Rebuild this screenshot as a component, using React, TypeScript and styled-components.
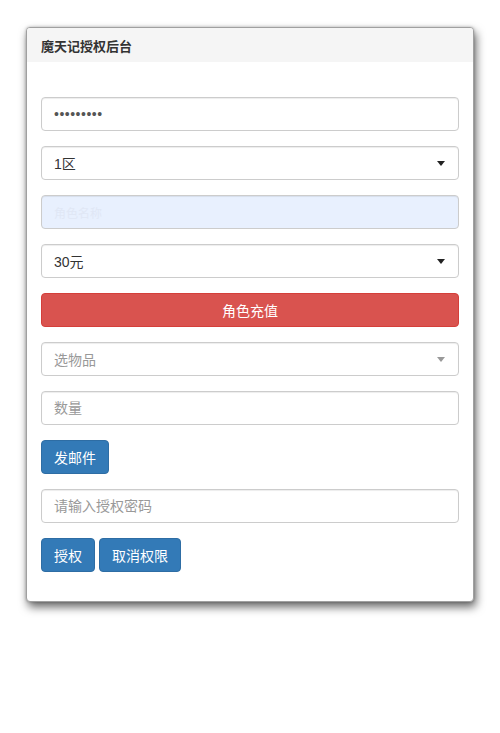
import React from 'react';
import styled, { createGlobalStyle } from 'styled-components';

const GlobalStyle = createGlobalStyle`
  html, body {
    margin: 0;
    padding: 0;
    background: #fff;
    font-family: "Liberation Sans", Arial, "Noto Sans CJK SC", sans-serif;
    font-size: 14px;
    color: #333;
  }
  * {
    box-sizing: border-box;
  }
`;

const Page = styled.div`
  padding: 27px 0 40px;
`;

const Panel = styled.div`
  width: 448px;
  margin: 0 auto;
  background: #fff;
  border: 1px solid #a0a0a0;
  border-radius: 4px;
  box-shadow: 2px 5px 10px rgba(0, 0, 0, 0.6), 0 0 3px rgba(0, 0, 0, 0.25);
`;

const PanelHeading = styled.div`
  height: 34px;
  padding: 0 14px;
  display: flex;
  align-items: center;
  background: #f5f5f5;
  border-radius: 3px 3px 0 0;
  font-size: 13px;
  font-weight: bold;
  color: #333;
`;

const PanelBody = styled.div`
  padding: 35px 14px 29px;
  display: flex;
  flex-direction: column;
  gap: 15px;
`;

const Field = styled.div<{ $autofill?: boolean }>`
  height: 34px;
  padding: 0 12px;
  display: flex;
  align-items: center;
  border: 1px solid #ccc;
  border-radius: 4px;
  background: ${p => (p.$autofill ? '#e8f0fe' : '#fff')};
  box-shadow: inset 0 1px 1px rgba(0, 0, 0, 0.075);
  font-size: 14px;
  color: #555;
`;

const Input = styled.input<{ $dots?: boolean; $faint?: boolean }>`
  width: 100%;
  border: none;
  outline: none;
  padding: 0;
  background: transparent;
  font-family: inherit;
  font-size: ${p => (p.$faint ? '12px' : '14px')};
  color: ${p => (p.$faint ? '#e0e7f5' : '#555')};
  letter-spacing: ${p => (p.$dots ? '0.5px' : 'normal')};

  &::placeholder {
    color: #999;
  }
`;

const SelectBox = styled(Field)`
  justify-content: space-between;
`;

const SelectText = styled.span<{ $placeholder?: boolean }>`
  color: ${p => (p.$placeholder ? '#999' : '#333')};
`;

const Caret = styled.span<{ $muted?: boolean }>`
  width: 0;
  height: 0;
  margin-right: 1px;
  border-left: 4px solid transparent;
  border-right: 4px solid transparent;
  border-top: 5px solid ${p => (p.$muted ? '#999' : '#222')};
`;

const Button = styled.button<{ $variant: 'danger' | 'primary'; $block?: boolean }>`
  height: 34px;
  padding: 0 12px;
  width: ${p => (p.$block ? '100%' : 'auto')};
  border: 1px solid ${p => (p.$variant === 'danger' ? '#d43f3a' : '#2e6da4')};
  border-radius: 4px;
  background: ${p => (p.$variant === 'danger' ? '#d9534f' : '#337ab7')};
  color: #fff;
  font-family: inherit;
  font-size: 14px;
  cursor: pointer;
`;

const ButtonRow = styled.div`
  display: flex;
  gap: 4px;
`;

function Select({ value, placeholder }: { value?: string; placeholder?: string }) {
  return (
    <SelectBox>
      <SelectText $placeholder={!value}>{value || placeholder}</SelectText>
      <Caret $muted={!value} />
    </SelectBox>
  );
}

export default function App() {
  return (
    <>
      <GlobalStyle />
      <Page>
        <Panel>
          <PanelHeading>魔天记授权后台</PanelHeading>
          <PanelBody>
            <Field>
              <Input type="password" defaultValue="123456789" $dots />
            </Field>
            <Select value="1区" />
            <Field $autofill>
              <Input defaultValue="角色名称" $faint />
            </Field>
            <Select value="30元" />
            <Button $variant="danger" $block>角色充值</Button>
            <Select placeholder="选物品" />
            <Field>
              <Input placeholder="数量" />
            </Field>
            <ButtonRow>
              <Button $variant="primary">发邮件</Button>
            </ButtonRow>
            <Field>
              <Input placeholder="请输入授权密码" />
            </Field>
            <ButtonRow>
              <Button $variant="primary">授权</Button>
              <Button $variant="primary">取消权限</Button>
            </ButtonRow>
          </PanelBody>
        </Panel>
      </Page>
    </>
  );
}
